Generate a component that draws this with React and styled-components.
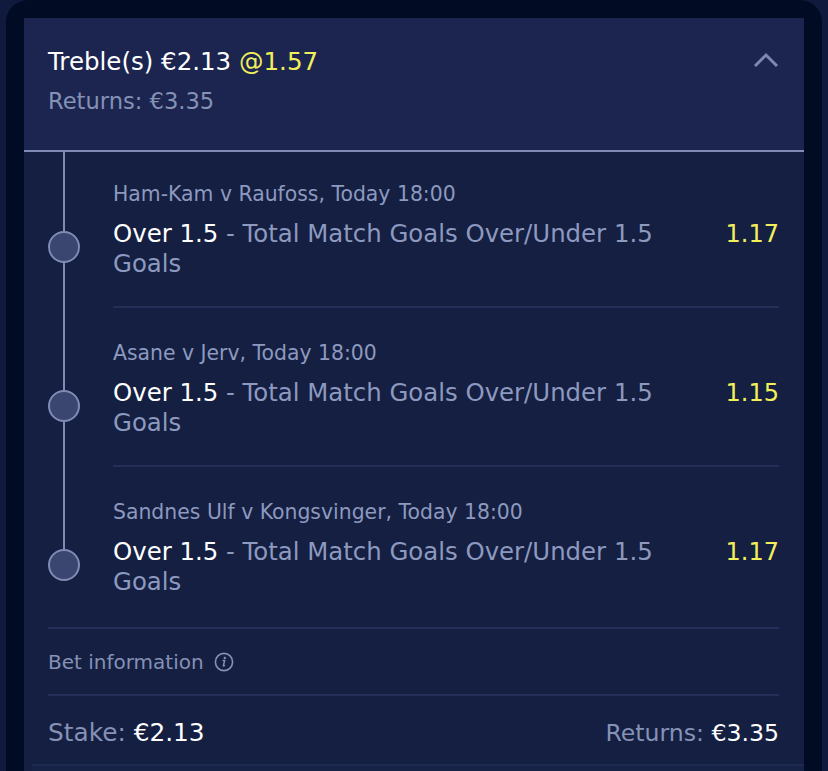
import React from 'react';
import styled, {createGlobalStyle} from 'styled-components';

const GlobalStyle = createGlobalStyle`
    html, body {
        margin: 0;
        padding: 0;
        background: #0f1a3c;
        font-family: "DejaVu Sans", Verdana, sans-serif;
        overflow: hidden;
    }
`;

const selections = [
    {match: 'Ham-Kam v Raufoss, Today 18:00', pick: 'Over 1.5', market: 'Total Match Goals Over/Under 1.5 Goals', odds: '1.17'},
    {match: 'Asane v Jerv, Today 18:00', pick: 'Over 1.5', market: 'Total Match Goals Over/Under 1.5 Goals', odds: '1.15'},
    {match: 'Sandnes Ulf v Kongsvinger, Today 18:00', pick: 'Over 1.5', market: 'Total Match Goals Over/Under 1.5 Goals', odds: '1.17'},
];

const Frame = styled.div`
    margin-left: 6px;
    width: 816px;
    height: 771px;
    overflow: hidden;
    background: #020b24;
    border-radius: 22px 22px 0 0;
    padding: 18px 18px 0 18px;
    box-sizing: border-box;
`;

const Card = styled.div`
    width: 780px;
    background: #141f42;
`;

const Header = styled.div`
    background: #1b2550;
    height: 134px;
    border-bottom: 2px solid #7f8bb5;
    box-sizing: border-box;
    padding: 29px 24px 0 24px;
    display: flex;
    justify-content: space-between;
`;

const Title = styled.div`
    color: #ffffff;
    font-size: 24.5px;
    line-height: 30px;
`;

const Odds = styled.span`
    color: #f2f05a;
`;

const SubTitle = styled.div`
    color: #8591b5;
    font-size: 22.6px;
    line-height: 28px;
    margin-top: 10px;
`;

const Chevron = styled.svg`
    margin-top: 4px;
    width: 28px;
    height: 20px;
`;

const Legs = styled.div`
    position: relative;
    padding: 0 25px 0 89px;
`;

const Leg = styled.div`
    padding-top: ${p => (p.first ? 29 : 32)}px;
    padding-bottom: ${p => (p.last ? 30 : 27)}px;
    border-bottom: ${p => (p.last ? 'none' : '2px solid #242f57')};
`;

const Rail = styled.div`
    position: absolute;
    left: 39px;
    top: 0;
    width: 2px;
    height: 413px;
    background: #7f8bb5;
`;

const Dot = styled.div`
    position: absolute;
    left: -65px;
    top: calc(50% - 18px);
    width: 28px;
    height: 28px;
    border-radius: 50%;
    background: #3a4670;
    border: 2px solid #7f8bb5;
`;

const MatchName = styled.div`
    color: #8d99bf;
    font-size: 20.4px;
    line-height: 26px;
`;

const PickRow = styled.div`
    position: relative;
    display: flex;
    justify-content: space-between;
    margin-top: 12px;
`;

const PickText = styled.div`
    width: 580px;
    font-size: 24.4px;
    line-height: 30px;
`;

const PickName = styled.span`
    color: #ffffff;
`;

const Market = styled.span`
    color: #8d99bf;
`;

const PickOdds = styled.div`
    color: #f2f05a;
    font-size: 24px;
    line-height: 30px;
`;

const Footer = styled.div`
    padding: 0 25px 0 24px;
`;

const InfoRow = styled.div`
    border-top: 2px solid #242f57;
    border-bottom: 2px solid #242f57;
    height: 69px;
    box-sizing: border-box;
    display: flex;
    align-items: center;
    gap: 10px;
    color: #8591b5;
    font-size: 20px;
`;

const TotalsRow = styled.div`
    height: 68px;
    padding-top: 5px;
    box-sizing: border-box;
    display: flex;
    justify-content: space-between;
    align-items: center;
    color: #8591b5;
`;

const Label = styled.span`
    font-size: ${p => p.size || 24}px;
`;

const Value = styled.span`
    color: #ffffff;
`;

const NextSection = styled.div`
    margin-left: 8px;
    height: 16px;
    border-top: 2px solid #1f2a52;
    background: #172247;
`;

function InfoIcon() {
    return (
        <svg width="20" height="20" viewBox="0 0 20 20">
            <circle cx="10" cy="10" r="8.6" fill="none" stroke="#8591b5" strokeWidth="1.6"/>
            <circle cx="10.8" cy="5.9" r="1.2" fill="#8591b5"/>
            <path d="M9.2 8.6 L10.6 8.6 L9.4 13.6 Q9.3 14.3 10.4 13.6" fill="none" stroke="#8591b5" strokeWidth="1.5" strokeLinecap="round"/>
        </svg>
    );
}

export default function App() {
    return (
        <>
            <GlobalStyle/>
            <Frame>
                <Card>
                    <Header>
                        <div>
                            <Title>Treble(s) €2.13 <Odds>@1.57</Odds></Title>
                            <SubTitle>Returns: €3.35</SubTitle>
                        </div>
                        <Chevron viewBox="0 0 28 20">
                            <path d="M3 15 L14 4 L25 15" fill="none" stroke="#7d88b5" strokeWidth="3"/>
                        </Chevron>
                    </Header>
                    <Legs>
                        <Rail/>
                        {selections.map((s, i) => (
                            <Leg key={i} first={i === 0} last={i === selections.length - 1}>
                                <MatchName>{s.match}</MatchName>
                                <PickRow>
                                    <Dot/>
                                    <PickText>
                                        <PickName>{s.pick}</PickName>
                                        <Market> - {s.market}</Market>
                                    </PickText>
                                    <PickOdds>{s.odds}</PickOdds>
                                </PickRow>
                            </Leg>
                        ))}
                    </Legs>
                    <Footer>
                        <InfoRow>Bet information <InfoIcon/></InfoRow>
                        <TotalsRow>
                            <Label size={24.8}>Stake: <Value>€2.13</Value></Label>
                            <Label size={23.6}>Returns: <Value>€3.35</Value></Label>
                        </TotalsRow>
                    </Footer>
                    <NextSection/>
                </Card>
            </Frame>
        </>
    );
}
